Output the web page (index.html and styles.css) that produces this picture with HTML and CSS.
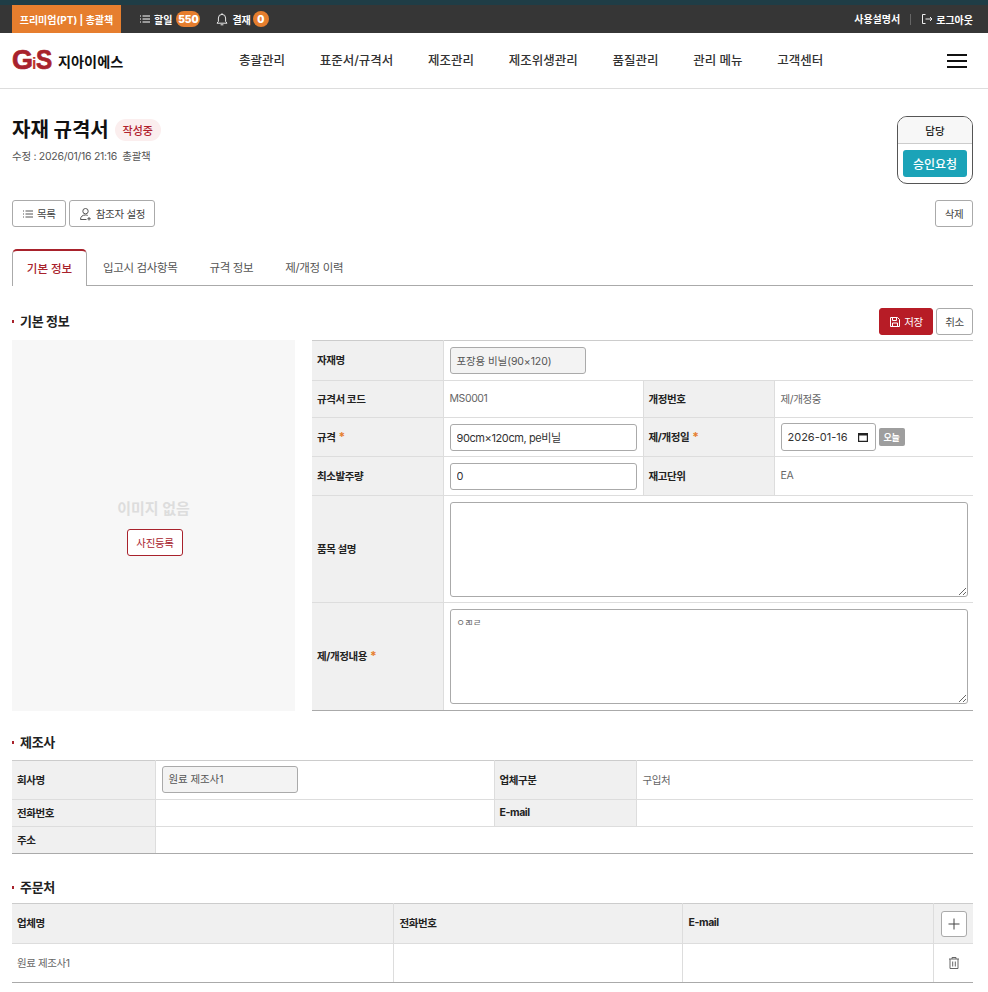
FILE: index.html
```html
<!DOCTYPE html>
<html lang="ko">
<head>
<meta charset="utf-8">
<title>자재 규격서</title>
<link rel="stylesheet" href="styles.css">
</head>
<body>
<div class="strip"></div>
<div class="topbar">
  <div class="top-left">
    <span class="plan">프리미엄(PT) | 총괄책</span>
    <span class="top-item todo"><svg class="ic12" viewBox="0 0 12 12"><path d="M1 3h1M1 6h1M1 9h1M3.5 3H11M3.5 6H11M3.5 9H11" fill="none" stroke="#fff" stroke-width="1"/></svg>할일<b class="count wide">550</b></span>
    <span class="top-item pay"><svg class="ic14" viewBox="0 0 14 14"><path d="M2 11.2h10l-1.4-1.8V6a3.6 3.6 0 0 0-7.2 0v3.4zM5.6 12.8h2.8M7 1.2v1.2" fill="none" stroke="#e8e8e8" stroke-width="1"/></svg>결재<b class="count tight">0</b></span>
  </div>
  <div class="top-right">
    <span class="manual">사용설명서</span>
    <span class="logout"><svg class="ic12" viewBox="0 0 12 12"><path d="M4.5 1.5H1.5v9h3M4.5 6H11M9 4l2 2-2 2" fill="none" stroke="#eee" stroke-width="1"/></svg>로그아웃</span>
  </div>
</div>
<header class="header">
  <div class="logo"><span class="mark">G<span class="mark-i">i</span><span class="mark-s">S</span></span><span class="logo-name">지아이에스</span></div>
  <nav class="nav">
    <a>총괄관리</a><a>표준서/규격서</a><a>제조관리</a><a>제조위생관리</a><a>품질관리</a><a>관리 메뉴</a><a>고객센터</a>
  </nav>
  <div class="burger"><span></span><span></span><span></span></div>
</header>
<main class="page">
  <div class="title-row">
    <div>
      <div class="title-line"><h1>자재 규격서</h1><span class="state">작성중</span></div>
      <p class="meta">수정 : 2026/01/16 21:16 &nbsp;총괄책</p>
    </div>
    <div class="approval"><div class="approval-head">담당</div><div class="approval-body"><button class="req">승인요청</button></div></div>
  </div>
  <div class="action-row">
    <div class="actions">
      <button class="btn btn-ic"><svg class="ic12" viewBox="0 0 12 12"><path d="M1 3h1M1 6h1M1 9h1M3.5 3H11M3.5 6H11M3.5 9H11" fill="none" stroke="#555" stroke-width="1"/></svg>목록</button>
      <button class="btn btn-ic"><svg class="ic14" viewBox="0 0 14 14"><circle cx="6.5" cy="4.2" r="2.7" fill="none" stroke="#555"/><path d="M1.5 12.5c0-3 2-4.5 5-4.5 1 0 1.6.2 2.2.4M1.5 12.5h6M10 10v3.5M8.3 11.8h3.5" fill="none" stroke="#555"/></svg>참조자 설정</button>
    </div>
    <button class="btn w38">삭제</button>
  </div>
  <div class="tabs">
    <a class="tab active">기본 정보</a><a class="tab">입고시 검사항목</a><a class="tab">규격 정보</a><a class="tab">제/개정 이력</a>
  </div>
  <div class="sec-head first">
    <h2>기본 정보</h2>
    <div class="sec-btns">
      <button class="btn save"><svg class="ic12" viewBox="0 0 12 12"><path d="M1.5 1.5h7l2 2v7h-9zM3.5 1.5v3h4v-3M3.5 10.5V7h5v3.5" fill="none" stroke="#fff"/></svg>저장</button>
      <button class="btn w37">취소</button>
    </div>
  </div>
  <div class="basic">
    <div class="photo">
      <div class="no-img">이미지 없음</div>
      <button class="photo-btn">사진등록</button>
    </div>
    <table class="grid basic-table">
      <colgroup><col class="c-th"><col class="c-td"><col class="c-th2"><col></colgroup>
      <tr class="r40"><th>자재명</th><td colspan="3"><span class="ro w136">포장용 비닐(90×120)</span></td></tr>
      <tr class="r37"><th>규격서 코드</th><td class="muted">MS0001</td><th>개정번호</th><td class="muted">제/개정중</td></tr>
      <tr class="r39"><th>규격 <em>*</em></th><td><input class="field" value="90cm×120cm, pe비닐"></td><th>제/개정일 <em>*</em></th><td><div class="date-wrap"><div class="date"><input class="date-input" value="2026-01-16"><svg class="cal" viewBox="0 0 10 10"><path d="M0 1h10v9H0zM1.2 3.4v5.4h7.6V3.4z" fill="#222" fill-rule="evenodd"/></svg></div><span class="today">오늘</span></div></td></tr>
      <tr class="r39"><th>최소발주량</th><td><input class="field" value="0"></td><th>재고단위</th><td class="muted">EA</td></tr>
      <tr class="r107"><th>품목 설명</th><td colspan="3"><textarea class="area"></textarea></td></tr>
      <tr class="r108"><th>제/개정내용 <em>*</em></th><td colspan="3"><textarea class="area small">ㅇㄻㄹ</textarea></td></tr>
    </table>
  </div>
  <div class="sec-head maker-head"><h2>제조사</h2></div>
  <table class="grid maker">
    <colgroup><col class="m-th"><col class="m-td"><col class="m-th2"><col></colgroup>
    <tr class="r39"><th>회사명</th><td><span class="ro w136">원료 제조사1</span></td><th>업체구분</th><td class="muted">구입처</td></tr>
    <tr class="r27"><th>전화번호</th><td></td><th>E-mail</th><td></td></tr>
    <tr class="r27"><th>주소</th><td colspan="3"></td></tr>
  </table>
  <div class="sec-head"><h2>주문처</h2></div>
  <table class="grid orders">
    <colgroup><col class="o1"><col class="o2"><col class="o3"><col></colgroup>
    <tr class="r40"><th>업체명</th><th>전화번호</th><th>E-mail</th><th class="center"><button class="plus"><svg class="ic14" viewBox="0 0 14 14"><path d="M7 1.5v11M1.5 7h11" stroke="#444" fill="none"/></svg></button></th></tr>
    <tr class="r39"><td class="muted">원료 제조사1</td><td></td><td></td><td class="center"><svg class="ic14 trash" viewBox="0 0 14 14"><path d="M2 3h10M5 3V1.5h4V3M3 3v9.5h8V3M5.7 5.5v5M8.3 5.5v5" fill="none" stroke="#666"/></svg></td></tr>
  </table>
</main>
</body>
</html>
```
FILE: styles.css
```css
* { box-sizing: border-box; }
html, body { margin: 0; padding: 0; background: #fff; }
body { font-family: Inter, "Noto Sans CJK KR", sans-serif; font-size: 11px; color: #222; height: 992px; overflow: hidden; }
button, input, textarea { font-family: inherit; }
.ic12 { width: 12px; height: 12px; flex: none; }
.ic14 { width: 14px; height: 14px; flex: none; }

.strip { height: 5px; background: #1f3d46; }
.topbar { height: 28px; background: #363636; color: #fff; display: flex; justify-content: space-between; padding: 0 15px 0 12px; font-weight: 700; font-size: 10px; }
.top-left, .top-right { display: flex; align-items: center; }
.plan { background: #e67e2e; height: 28px; width: 109px; display: flex; align-items: center; justify-content: center; margin-right: 18px; font-size: 10px; }
.top-item { display: flex; align-items: center; gap: 3px; }
.todo { margin-right: 15px; }
.count { background: #e67e2e; border-radius: 9px; height: 16px; min-width: 16px; padding: 0 3px; display: inline-flex; align-items: center; justify-content: center; font-size: 10px; margin-left: 1px; }
.count.wide { width: 24px; }
.count.tight { margin-left: -1px; }
.manual { padding-right: 10px; border-right: 1px solid #666; margin-right: 10px; line-height: 11px; }
.logout { display: flex; align-items: center; gap: 3px; }

.header { height: 56px; border-bottom: 1px solid #ddd; display: flex; align-items: center; padding: 0 21px 0 12px; }
.logo { width: 227px; display: flex; align-items: center; gap: 6px; }
.mark { font-family: "Liberation Sans", sans-serif; font-weight: 700; font-size: 27px; color: #a8222c; display: flex; align-items: baseline; line-height: 1; -webkit-text-stroke: 0.7px #a8222c; width: 40px; }
.mark-i { font-size: 16px; margin-left: -1px; color: #c0392b; -webkit-text-stroke: 0; }
.mark-s { display: inline-block; transform: scaleX(0.9); transform-origin: left; }
.logo-name { font-size: 14.2px; font-weight: 700; color: #111; }
.nav { display: flex; gap: 34.7px; flex: 1; padding-bottom: 3px; }
.nav a { font-size: 12.5px; font-weight: 500; color: #333; }
.burger { width: 20px; display: flex; flex-direction: column; gap: 4px; }
.burger span { height: 2px; background: #111; }

.page { padding: 0 15px 0 12px; }
.title-row { display: flex; justify-content: space-between; padding-top: 27px; height: 111px; }
.title-line { display: flex; align-items: center; gap: 6px; margin-top: 2px; }
h1 { margin: 0; font-size: 20px; font-weight: 700; color: #111; line-height: 22px; padding-top: 1px; }
.state { background: #fbeeee; color: #b0202c; border-radius: 11px; height: 22px; width: 46px; display: flex; align-items: center; justify-content: center; font-size: 11px; font-weight: 500; }
.meta { margin: 9px 0 0; font-size: 10.5px; color: #555; line-height: 14px; letter-spacing: -0.28px; }
.approval { width: 76px; height: 68px; border: 1px solid #555; border-radius: 10px; overflow: hidden; }
.approval-head { height: 27px; background: #f7f7f7; border-bottom: 1px solid #ccc; font-size: 10.5px; font-weight: 500; display: flex; align-items: center; justify-content: center; }
.approval-body { padding: 6px 5px 0; display: flex; justify-content: center; }
.req { width: 64px; height: 27px; border: 0; border-radius: 3px; background: #1ba3b8; color: #fff; font-size: 12px; font-weight: 500; padding: 0 0 1px; }

.action-row { display: flex; justify-content: space-between; height: 27px; }
.actions { display: flex; gap: 3px; }
.btn { height: 27px; background: #fff; border: 1px solid #aaa; border-radius: 3px; padding: 0; font-size: 10.5px; letter-spacing: -0.3px; color: #444; display: inline-flex; align-items: center; justify-content: center; gap: 3px; }
.btn-ic { padding: 0 9px; }
.w38 { width: 38px; }
.w37 { width: 37px; }

.tabs { display: flex; margin-top: 22px; height: 37px; border-bottom: 1px solid #aaa; }
.tab { height: 37px; display: flex; align-items: center; padding: 0 16px 2px; font-size: 11.5px; letter-spacing: -0.35px; color: #555; }
.tab.active { width: 75px; padding: 0 0 2px; justify-content: center; color: #a8222c; font-weight: 500; letter-spacing: 0; background: #fff; border: 1px solid #aaa; border-top: 2px solid #a8222c; border-bottom: 0; border-radius: 5px 5px 0 0; }

.sec-head { display: flex; justify-content: space-between; align-items: center; height: 27px; margin-top: 20px; }
.sec-head.first { margin-top: 22px; }
.sec-head.maker-head { margin-top: 18px; }
h2 { margin: 0; font-size: 13px; font-weight: 700; color: #222; padding: 0 0 2px 8px; position: relative; line-height: 16px; letter-spacing: -0.3px; }
h2::before { content: ""; position: absolute; left: 0; top: 7px; width: 2px; height: 3px; background: #a8222c; }
.sec-btns { display: flex; gap: 3px; }
.save { background: #b71c26; border-color: #b71c26; color: #fff; width: 54px; }

.basic { display: flex; gap: 17px; margin-top: 5px; }
.photo { width: 283px; height: 371px; background: #f7f7f7; display: flex; flex-direction: column; align-items: center; justify-content: center; padding-top: 1px; }
.no-img { font-size: 15px; font-weight: 700; color: #ddd; margin-bottom: 11px; }
.photo-btn { width: 56px; height: 27px; background: #fff; border: 1px solid #a8222c; border-radius: 3px; color: #a8222c; font-size: 10.5px; letter-spacing: -0.3px; padding: 0; margin-left: 3px; }

.grid { border-collapse: collapse; table-layout: fixed; border-top: 1px solid #ccc; border-bottom: 1px solid #aaa; }
.grid th, .grid td { border-bottom: 1px solid #ddd; border-left: 1px solid #ddd; padding: 0 5px 2px; text-align: left; font-size: 10.5px; letter-spacing: -0.4px; }
.grid td { padding: 0 5px 0 6px; }
.grid td.muted { padding-bottom: 1px; }
.grid tr:last-child th, .grid tr:last-child td { border-bottom: 1px solid #aaa; }
.grid th:first-child, .grid td:first-child { border-left: 0; }
.grid th:first-child { padding-left: 5px; }
.grid th { background: #f0f0f0; font-weight: 700; color: #222; }
.grid em { color: #e67e2e; font-style: normal; font-size: 12px; line-height: 0; padding-left: 1px; }
.grid .center { text-align: center; padding: 0; }
.orders td:first-child { padding-left: 5px; }
.orders th:nth-child(2), .orders th:nth-child(3) { padding-left: 6px; }
.muted { color: #666; }
.basic-table { flex: 1; width: 661px; }
.c-th { width: 131px; }
.c-td { width: 200px; }
.c-th2 { width: 131px; }
.r27 { height: 27px; }
.r37 { height: 37px; }
.r39 { height: 39px; }
.r40 { height: 40px; }
.r107 { height: 107px; }
.r108 { height: 108px; }
.ro { display: flex; align-items: center; height: 27px; background: #f3f3f3; border: 1px solid #aaa; border-radius: 3px; padding: 0 6px 1px; color: #555; font-size: 10.5px; letter-spacing: -0.1px; }
.maker .ro { margin-bottom: 2px; }
.w136 { width: 136px; }
.field { display: block; width: 187px; height: 27px; border: 1px solid #aaa; border-radius: 3px; padding: 0 6px; font-size: 11px; letter-spacing: -0.4px; color: #333; background: #fff; }
.date-wrap { display: flex; align-items: center; gap: 3px; }
.date { width: 95px; height: 28px; border: 1px solid #aaa; border-radius: 3px; padding: 0 7px 0 6px; display: flex; align-items: center; background: #fff; }
.date-input { width: 70px; flex: none; border: 0; padding: 0; margin: 0; font-size: 11px; color: #333; background: transparent; outline: none; }
.cal { width: 10px; height: 10px; flex: none; }
.today { width: 26px; height: 18px; background: #9e9e9e; color: #fff; border-radius: 2px; font-size: 9px; font-weight: 700; display: flex; align-items: center; justify-content: center; }
.area { display: block; width: 518px; height: 95px; border: 1px solid #aaa; border-radius: 3px; padding: 6px; font-size: 11px; color: #333; background: #fff; }
.area.small { font-size: 9px; color: #666; }

.maker { width: 961px; margin-top: 4px; }
.m-th { width: 143px; }
.m-td { width: 339px; }
.m-th2 { width: 142px; }
.orders { width: 961px; margin-top: 2px; }
.o1 { width: 381px; }
.o2 { width: 289px; }
.o3 { width: 251px; }
.plus { width: 26px; height: 26px; background: #fff; border: 1px solid #aaa; border-radius: 3px; padding: 0; margin-left: 2px; display: inline-flex; align-items: center; justify-content: center; vertical-align: middle; }
.trash { margin-left: 2px; vertical-align: middle; }
```
